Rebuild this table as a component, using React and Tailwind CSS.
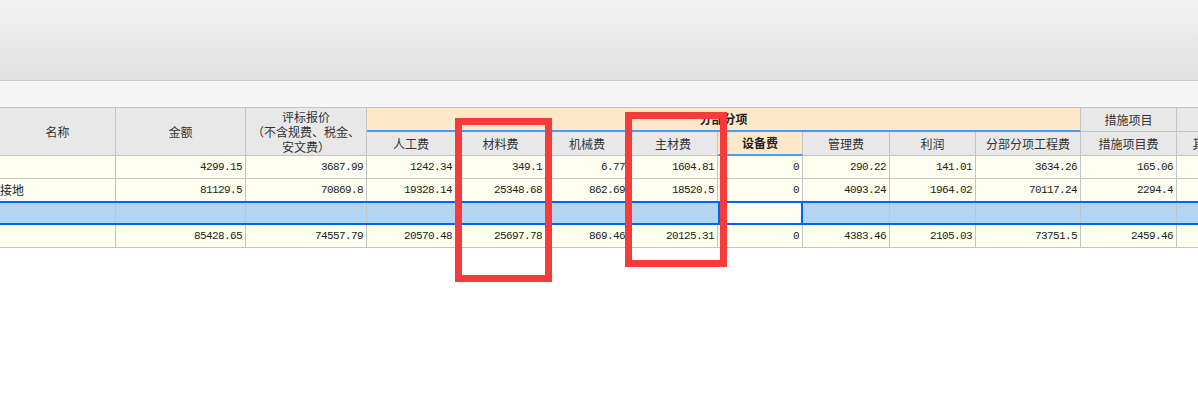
const cols = 'grid grid-cols-[116px_130px_121px_89px_90px_83px_89px_85px_87px_86px_105px_96px_92px]'

const rows = [
  ['', '4299.15', '3687.99', '1242.34', '349.1', '6.77', '1604.81', '0', '290.22', '141.01', '3634.26', '165.06', ''],
  ['接地', '81129.5', '70869.8', '19328.14', '25348.68', '862.69', '18520.5', '0', '4093.24', '1964.02', '70117.24', '2294.4', ''],
]
const total = ['', '85428.65', '74557.79', '20570.48', '25697.78', '869.46', '20125.31', '0', '4383.46', '2105.03', '73751.5', '2459.46', '']

const subHeads = ['人工费', '材料费', '机械费', '主材费', '设备费', '管理费', '利润', '分部分项工程费', '措施项目费', '其他项目费']

function HeadCell({ children, className = '' }) {
  return (
    <div className={`flex items-center justify-center border-r border-b border-[#c4c4c4] bg-[#e8e8e8] text-[12px] text-[#333] leading-[15px] text-center whitespace-nowrap overflow-hidden ${className}`}>
      {children}
    </div>
  )
}

function DataRow({ values, height = 'h-[23px]', border = 'border-b border-[#c4c4c4]' }) {
  return (
    <div className={`${cols} ${height} ${border} bg-[#fefff0]`}>
      {values.map((v, i) => (
        <div
          key={i}
          className={`flex items-center border-r border-[#c4c4c4] overflow-hidden whitespace-nowrap ${i === 0 ? 'justify-start text-[12px] font-["Noto_Sans_CJK_SC",sans-serif] text-[#222]' : 'justify-end pr-[3px] text-[11px] tracking-[-0.6px] font-["Liberation_Mono",monospace] text-[#222]'}`}
        >
          {v}
        </div>
      ))}
    </div>
  )
}

export default function App() {
  return (
    <div className="relative w-[1198px] h-[418px] overflow-hidden bg-white font-['Noto_Sans_CJK_SC',sans-serif]">
      <div className="h-[81px] bg-gradient-to-b from-[#f3f3f3] to-[#e0e0e0] border-b border-[#cfcfcf]" />
      <div className="h-[27px] bg-[#f5f5f5] border-b border-[#c4c4c4]" />

      <div className="w-[1198px] overflow-hidden">
        <div className={`${cols} grid-rows-[24px_24px] w-max`}>
          <HeadCell className="row-span-2">名称</HeadCell>
          <HeadCell className="row-span-2">金额</HeadCell>
          <HeadCell className="row-span-2 flex-col">
            <span>评标报价</span>
            <span>（不含规费、税金、</span>
            <span>安文费）</span>
          </HeadCell>
          <div className="col-span-8 flex items-center justify-center bg-[#ffe7c9] border-r border-b-2 border-r-[#c4c4c4] border-b-[#4a9cf6] text-[12px] font-bold text-[#222]">
            分部分项
          </div>
          <HeadCell>措施项目</HeadCell>
          <HeadCell />
          {subHeads.map((h) =>
            h === '设备费' ? (
              <div key={h} className="flex items-center justify-center bg-[#ffe7c9] border-r border-r-[#c4c4c4] border-b-2 border-b-[#4a9cf6] text-[12px] font-bold text-[#222]">
                {h}
              </div>
            ) : (
              <HeadCell key={h}>{h}</HeadCell>
            )
          )}
        </div>

        <DataRow values={rows[0]} />
        <DataRow values={rows[1]} height="h-[22px]" border="" />

        <div className={`${cols} h-[24px] border-y-2 border-[#0064ff] bg-[#b3d5f2]`}>
          {total.map((_, i) => (
            <div
              key={i}
              className={i === 7 ? 'bg-[#fefff0] border-x-2 border-[#0064ff]' : i === 6 ? '' : 'border-r border-[#c4c4c4]'}
            />
          ))}
        </div>

        <DataRow values={total} />
      </div>

      <div className="absolute left-[455px] top-[118px] w-[97px] h-[164px] border-[7px] border-[#f73b3b]" />
      <div className="absolute left-[625px] top-[112px] w-[102px] h-[155px] border-[7px] border-[#f73b3b]" />
    </div>
  )
}
